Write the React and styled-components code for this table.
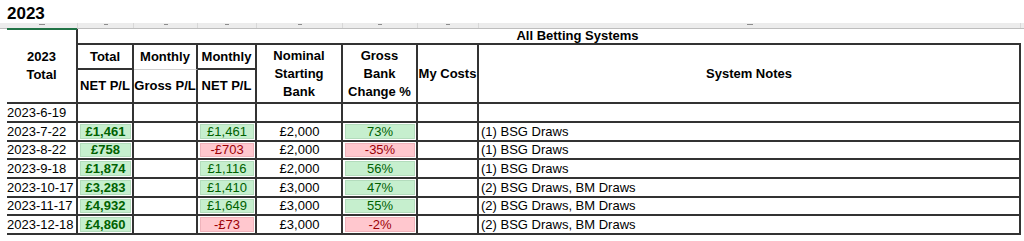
import React from 'react';
import styled, { createGlobalStyle, css } from 'styled-components';

const COLS = '71px 56px 64px 59px 86px 75px 61px 542px';
const LINE = '#333';

const Global = createGlobalStyle`
  html, body { margin: 0; padding: 0; background: #fff; }
  body {
    font-family: "Liberation Sans", Arial, sans-serif;
    font-size: 13px;
    color: #000;
  }
`;

const Page = styled.div`
  width: 1024px;
  height: 241px;
  overflow: hidden;
`;

const Title = styled.h1`
  margin: 4px 0 0 7px;
  height: 19px;
  font-size: 17px;
  line-height: 19px;
  font-weight: 700;
`;

const Strip = styled.div`
  display: grid;
  grid-template-columns: ${COLS};
  height: 5px;
  padding-left: 7px;
  background: #ececec;
  border-bottom: 1px solid #bdbdbd;
`;

const StripCell = styled.div`
  position: relative;
  display: flex;
  justify-content: center;
  align-items: flex-start;
  border-right: 1px solid #d8d8d8;
  ${(p) =>
    p.$active &&
    css`
      &::after {
        content: '';
        position: absolute;
        left: 0;
        right: 0;
        bottom: -2px;
        height: 2px;
        background: #217346;
      }
    `}
`;

const Tick = styled.span`
  margin-top: 1px;
  width: ${(p) => (p.$double ? '6px' : '4px')};
  height: 1px;
  background: #8c8c8c;
`;

const Sheet = styled.div`
  display: grid;
  grid-template-columns: ${COLS};
  grid-template-rows: 16px 25px 34px 19px 19px 18px 19px 19px 18px 19px;
  margin-left: 7px;
  width: 1014px;
`;

const borderFor = (kind) => {
  if (kind === 'dark') return `2px solid ${LINE}`;
  if (kind === 'light') return '1px solid #d0d0d0';
  return 'none';
};

const Cell = styled.div`
  grid-column: ${(p) => p.$col} / span ${(p) => p.$span || 1};
  grid-row: ${(p) => p.$row} / span ${(p) => p.$rspan || 1};
  display: flex;
  align-items: center;
  justify-content: ${(p) => (p.$left ? 'flex-start' : 'center')};
  border-right: ${(p) => borderFor(p.$r)};
  border-bottom: ${(p) => borderFor(p.$b)};
  min-width: 0;
  white-space: nowrap;
  overflow: hidden;
`;

const HeadCell = styled(Cell)`
  font-weight: 700;
  text-align: center;
  line-height: 18px;
  white-space: normal;
`;

const DataCell = styled(Cell)`
  padding: ${(p) =>
    p.$flush ? '0' : p.$left ? '0 0 0 2px' : '1px 1px 1px 2px'};
  align-items: stretch;
`;

const Plain = styled.span`
  flex: 1;
  display: flex;
  align-items: center;
  justify-content: ${(p) => (p.$left ? 'flex-start' : 'center')};
  line-height: 16px;
`;

const Fill = styled(Plain)`
  background: ${(p) => (p.$neg ? '#ffc7ce' : '#c6efce')};
  color: ${(p) => (p.$neg ? '#9c0006' : '#006100')};
  font-weight: ${(p) => (p.$bold ? 700 : 400)};
  border: 1px solid ${(p) => (p.$neg ? '#efb3bb' : '#b3dcbc')};
`;

const rows = [
  { d: '2023-6-19' },
  { d: '2023-7-22', t: '£1,461', m: '£1,461', b: '£2,000', p: '73%', n: '(1) BSG Draws' },
  { d: '2023-8-22', t: '£758', m: '-£703', b: '£2,000', p: '-35%', n: '(1) BSG Draws' },
  { d: '2023-9-18', t: '£1,874', m: '£1,116', b: '£2,000', p: '56%', n: '(1) BSG Draws' },
  { d: '2023-10-17', t: '£3,283', m: '£1,410', b: '£3,000', p: '47%', n: '(2) BSG Draws, BM Draws' },
  { d: '2023-11-17', t: '£4,932', m: '£1,649', b: '£3,000', p: '55%', n: '(2) BSG Draws, BM Draws' },
  { d: '2023-12-18', t: '£4,860', m: '-£73', b: '£3,000', p: '-2%', n: '(2) BSG Draws, BM Draws' },
];

const isNeg = (v) => v.startsWith('-');

function DataRow({ r, row }) {
  return (
    <>
      <DataCell $col={1} $row={row} $r="dark" $b="dark" $left $flush>
        <Plain $left>{r.d}</Plain>
      </DataCell>
      <DataCell $col={2} $row={row} $r="dark" $b="dark">
        {r.t ? <Fill $bold>{r.t}</Fill> : <Plain />}
      </DataCell>
      <DataCell $col={3} $row={row} $r="dark" $b="dark">
        <Plain />
      </DataCell>
      <DataCell $col={4} $row={row} $r="dark" $b="dark">
        {r.m ? <Fill $neg={isNeg(r.m)}>{r.m}</Fill> : <Plain />}
      </DataCell>
      <DataCell $col={5} $row={row} $r="dark" $b="dark">
        <Plain>{r.b || ''}</Plain>
      </DataCell>
      <DataCell $col={6} $row={row} $r="dark" $b="dark">
        {r.p ? <Fill $neg={isNeg(r.p)}>{r.p}</Fill> : <Plain />}
      </DataCell>
      <DataCell $col={7} $row={row} $r="dark" $b="dark">
        <Plain />
      </DataCell>
      <DataCell $col={8} $row={row} $r="dark" $b="dark" $left>
        <Plain $left>{r.n || ''}</Plain>
      </DataCell>
    </>
  );
}

export default function App() {
  return (
    <Page>
      <Global />
      <Title>2023</Title>
      <Strip>
        <StripCell $active><Tick $double /></StripCell>
        <StripCell><Tick /></StripCell>
        <StripCell><Tick /></StripCell>
        <StripCell><Tick /></StripCell>
        <StripCell><Tick /></StripCell>
        <StripCell><Tick /></StripCell>
        <StripCell><Tick /></StripCell>
        <StripCell><Tick $double /></StripCell>
      </Strip>
      <Sheet>
        <HeadCell $col={1} $row={1} $rspan={3} $r="dark" $b="dark">
          2023<br />Total
        </HeadCell>
        <HeadCell $col={2} $row={1} $b="dark" />
        <HeadCell $col={3} $row={1} $span={6} $b="dark">
          All Betting Systems
        </HeadCell>

        <HeadCell $col={2} $row={2} $r="dark" $b="dark">Total</HeadCell>
        <HeadCell $col={3} $row={2} $r="dark" $b="light">Monthly</HeadCell>
        <HeadCell $col={4} $row={2} $r="dark" $b="dark">Monthly</HeadCell>
        <HeadCell $col={5} $row={2} $rspan={2} $r="dark" $b="dark">
          Nominal<br />Starting<br />Bank
        </HeadCell>
        <HeadCell $col={6} $row={2} $rspan={2} $r="dark" $b="dark">
          Gross<br />Bank<br />Change %
        </HeadCell>
        <HeadCell $col={7} $row={2} $rspan={2} $r="dark" $b="dark">
          My Costs
        </HeadCell>
        <HeadCell $col={8} $row={2} $rspan={2} $r="dark" $b="dark">
          System Notes
        </HeadCell>

        <HeadCell $col={2} $row={3} $r="dark" $b="dark">NET P/L</HeadCell>
        <HeadCell $col={3} $row={3} $r="dark" $b="dark">Gross P/L</HeadCell>
        <HeadCell $col={4} $row={3} $r="dark" $b="dark">NET P/L</HeadCell>

        {rows.map((r, i) => (
          <DataRow key={r.d} r={r} row={4 + i} />
        ))}
      </Sheet>
    </Page>
  );
}
